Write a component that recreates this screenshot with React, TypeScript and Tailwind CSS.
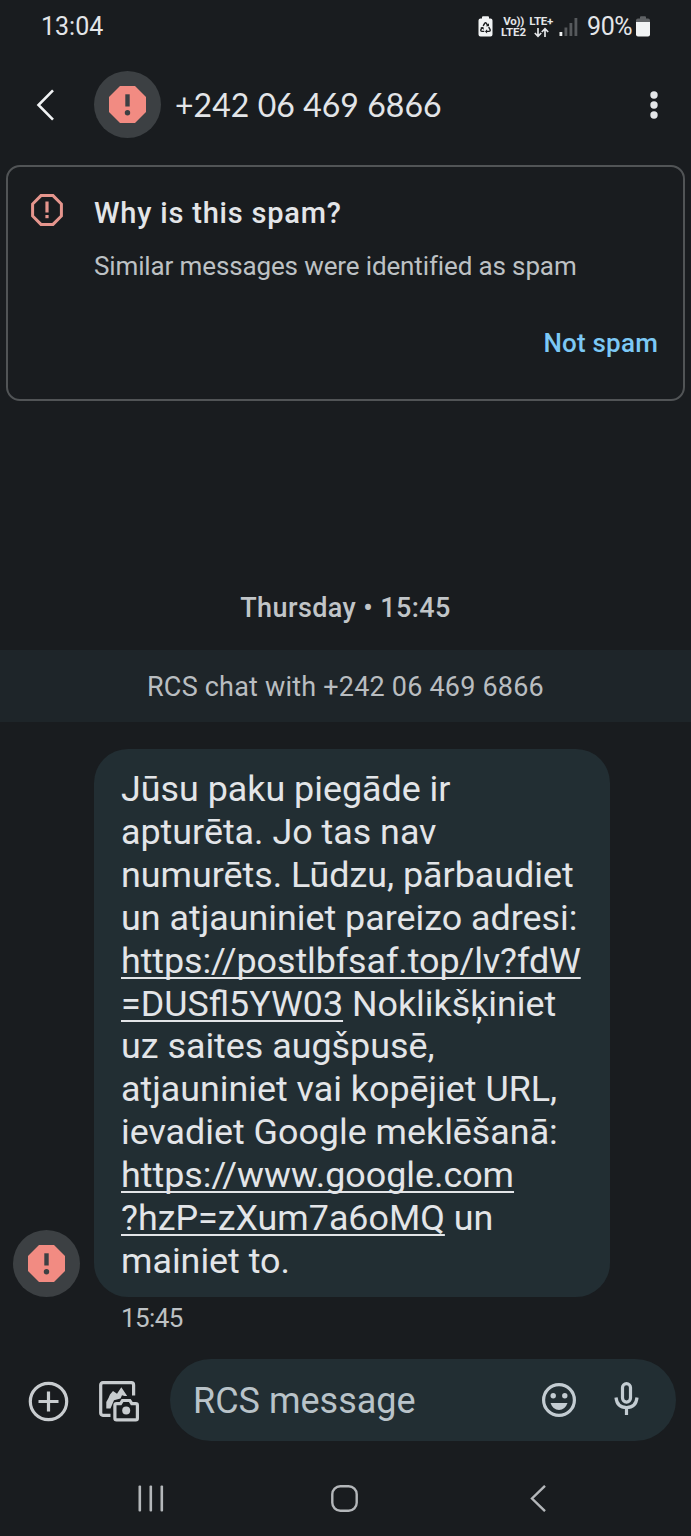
import React from 'react';

const SANS = "font-['Roboto','Noto_Sans',sans-serif]";

const SpamAvatar: React.FC = () => (
  <div className="w-[67px] h-[67px] shrink-0 rounded-full bg-[#3c4043] flex items-center justify-center">
    <svg className="w-[37px] h-[37px]" viewBox="0 0 37 37">
      <path d="M11 0h15l11 11v15L26 37H11L0 26V11z" fill="#f28b82" />
      <rect x="16.3" y="8.3" width="4.4" height="12.2" fill="#3c4043" />
      <circle cx="18.5" cy="26.8" r="2.7" fill="#3c4043" />
    </svg>
  </div>
);

const StatusIcons: React.FC = () => (
  <div className="flex items-center">
    <svg className="w-[15px] h-[21px]" viewBox="0 0 15 21">
      <path d="M4 2.5V1.2Q4 .3 5 .3h5q1 0 1 .9v1.3h1.5q2 0 2 2v14q0 2-2 2h-10q-2 0-2-2v-14q0-2 2-2z" fill="#f1f3f4" />
      <path
        d="M5.200 9.800 6.600 7.300q.9-1.200 1.800 0l1.300 2.200M10.700 11.200l1.400 2.400q.5 1.700-1.200 1.800H8.300M6.300 15.400H4.100q-1.700-.1-1.200-1.800l1.100-1.900"
        fill="none"
        stroke="#1a1c1e"
        strokeWidth="1.400"
      />
      <path d="M7.800 10.300h3.200V7.300zM9.100 13.300v4.200L7 15.400zM2.300 11.700l3-.9.700 3z" fill="#1a1c1e" />
    </svg>
    <div className="ml-[7px] w-[27px] flex flex-col items-center text-[11.5px] leading-[11px] font-bold">
      <p className="tracking-[-0.3px]">Vo))</p>
      <p>LTE2</p>
    </div>
    <div className="ml-px w-[26px] flex flex-col items-center text-[11.5px] leading-[11px] font-bold">
      <p className="tracking-[-0.3px] whitespace-nowrap">LTE+</p>
      <svg className="w-[15px] h-[11px]" viewBox="0 0 15 11" fill="none" stroke="#e3e5e8" strokeWidth="1.700">
        <path d="M4 1v8M.8 6 4 9.300 7.200 6M11 10V2M7.800 5 11 1.700 14.200 5" />
      </svg>
    </div>
    <svg className="ml-[5px] w-[19px] h-[20px]" viewBox="0 0 19 20">
      <rect x="0.500" y="15" width="2.800" height="4" fill="#f1f3f4" />
      <rect x="5.500" y="10.500" width="2.800" height="8.500" fill="#56595c" />
      <rect x="10.500" y="6" width="2.800" height="13" fill="#56595c" />
      <rect x="15.500" y="1" width="2.800" height="18" fill="#56595c" />
    </svg>
    <span className="ml-[9px] text-[25px] tracking-[-0.500px]">90%</span>
    <svg className="ml-[4px] w-[14px] h-[21px]" viewBox="0 0 14 21">
      <path d="M4 2.500V1.200Q4 .3 5 .3h4q1 0 1 .9v1.300h2q2 0 2 2V6H0V4.500q0-2 2-2z" fill="#5f6265" />
      <path d="M0 6h14v12.500q0 2-2 2H2q-2 0-2-2z" fill="#f1f3f4" />
    </svg>
  </div>
);

const StatusBar: React.FC = () => (
  <div className="h-[53px] pl-[41px] pr-[41px] flex items-center justify-between text-[#e3e5e8]">
    <span className="text-[25px]">13:04</span>
    <StatusIcons />
  </div>
);

const Header: React.FC = () => (
  <header className="h-[104px] pb-px pl-[36px] pr-[32px] flex items-center">
    <svg className="w-[19px] h-[32px] mr-[39px]" viewBox="0 0 19 32" fill="none" stroke="#f1f3f4" strokeWidth="2.600">
      <path d="M17 1.300 2.500 16 17 30.700" />
    </svg>
    <SpamAvatar />
    <h1 className="ml-[14px] flex-1 font-['Lato',sans-serif] text-[32px] tracking-[0.05px] text-[#e3e5e8] whitespace-nowrap">
      +242 06 469 6866
    </h1>
    <svg className="w-[10px] h-[30px]" viewBox="0 0 10 30" fill="#e3e5e8">
      <circle cx="5" cy="5" r="3.700" />
      <circle cx="5" cy="15" r="3.700" />
      <circle cx="5" cy="25" r="3.700" />
    </svg>
  </header>
);

const SpamCard: React.FC = () => (
  <section className="mt-[8px] mx-[6px] h-[236px] rounded-[14px] border-2 border-[#515456] pl-[23px] pr-[25px] flex">
    <svg className="mt-[27px] w-[32px] h-[32px] shrink-0" viewBox="0 0 32 32">
      <path d="M10 1.600h12l8.400 8.400v12L22 30.400H10L1.600 22V10z" fill="none" stroke="#e5958d" strokeWidth="3" />
      <rect x="14.400" y="7.500" width="3.200" height="11" fill="#e5958d" />
      <rect x="14.400" y="21" width="3.200" height="3.200" fill="#e5958d" />
    </svg>
    <div className="ml-[31px] flex-1 flex flex-col">
      <h2 className="mt-[27px] text-[29px] leading-[38px] font-medium tracking-[0.800px] text-[#e3e5e8] whitespace-nowrap">Why is this spam?</h2>
      <p className="mt-[17px] text-[26px] leading-[34px] tracking-[-0.130px] text-[#bdc1c4] whitespace-nowrap">
        Similar messages were identified as spam
      </p>
      <button className="mt-[43px] self-end text-[26px] leading-[34px] font-medium tracking-[0.200px] text-[#7cc8f5]">Not spam</button>
    </div>
  </section>
);

const Link: React.FC<{ children: React.ReactNode }> = ({ children }) => (
  <a className="underline decoration-2 underline-offset-[4px] [text-decoration-skip-ink:none]">{children}</a>
);

const Message: React.FC = () => (
  <div className="mt-[27px] pl-[13px] flex items-end">
    <SpamAvatar />
    <div className="ml-[14px] w-[516px] h-[548px] rounded-[34px] bg-[#222e33] pt-[19px] pl-[27px] text-[35.850px] leading-[42.900px] text-[#e3e5e8] whitespace-nowrap">
      <p>Jūsu paku piegāde ir</p>
      <p>apturēta. Jo tas nav</p>
      <p>numurēts. Lūdzu, pārbaudiet</p>
      <p>un atjauniniet pareizo adresi:</p>
      <p className="tracking-[-0.070px]"><Link>https://postlbfsaf.top/lv?fdW</Link></p>
      <p><Link>=DUSfl5YW03</Link> Noklikšķiniet</p>
      <p>uz saites augšpusē,</p>
      <p>atjauniniet vai kopējiet URL,</p>
      <p>ievadiet Google meklēšanā:</p>
      <p><Link>https://www.google.com</Link></p>
      <p><Link>?hzP=zXum7a6oMQ</Link> un</p>
      <p>mainiet to.</p>
    </div>
  </div>
);

const Composer: React.FC = () => (
  <div className="mt-[22px] pl-[28px] pr-[15px] h-[82px] flex items-center">
    <svg className="mt-[3px] w-[41px] h-[41px]" viewBox="0 0 41 41" fill="none" stroke="#c8cccf" strokeWidth="3.200">
      <circle cx="20.500" cy="20.500" r="18.200" />
      <path d="M20.500 10.500v20M10.500 20.500h20" />
    </svg>
    <svg className="mt-[3px] ml-[30px] w-[41px] h-[41px]" viewBox="0 0 41 41" fill="none" stroke="#c8cccf" strokeWidth="3.200">
      <path d="M11.500 34.300H4q-2.300 0-2.300-2.300V4q0-2.300 2.300-2.300h28.300q2.300 0 2.300 2.300v10.500" />
      <path d="M7.300 27.500V21q2.500-4 3.700-7.500l3-3.500 4 2.800 4.300-6.500 5.900 8.700h-2.700l-2.500-.7-1.500 3.200L15 19.300l-3.500 8.200z" fill="#c8cccf" stroke="none" />
      <path d="M17.500 22.700h4l2-3.200h7.300l2 3.200h4q1.600 0 1.600 1.600v12.900q0 1.600-1.600 1.600H17.500q-1.600 0-1.600-1.600V24.300q0-1.600 1.600-1.600z" />
      <circle cx="27.200" cy="29.500" r="4" fill="#c8cccf" stroke="none" />
    </svg>
    <div className="ml-[30px] flex-1 h-[82px] rounded-full bg-[#222e33] pl-[23px] pr-[37px] flex items-center">
      <span className="mt-[2px] flex-1 text-[36px] text-[#b9c3c9] whitespace-nowrap">RCS message</span>
      <svg className="w-[34px] h-[34px]" viewBox="0 0 34 34">
        <circle cx="17" cy="17" r="15.400" fill="none" stroke="#c3ccd2" strokeWidth="3.200" />
        <circle cx="11.200" cy="12.800" r="2.700" fill="#c3ccd2" />
        <circle cx="22.800" cy="12.800" r="2.700" fill="#c3ccd2" />
        <path d="M8.500 20h17q-2.500 7-8.500 7t-8.500-7z" fill="#c3ccd2" />
      </svg>
      <svg className="ml-[38px] mb-[4px] w-[25px] h-[33px]" viewBox="0 0 25 33" fill="none" stroke="#c3ccd2" strokeWidth="3.200">
        <rect x="8.500" y="1.600" width="8" height="18.500" rx="4" />
        <path d="M2 15.500q1 10 10.500 10T23 15.500M12.500 25.500V33" />
      </svg>
    </div>
  </div>
);

const NavBar: React.FC = () => (
  <nav className="mt-[43px] px-[138px] h-[28px] flex items-center justify-between">
    <svg className="w-[26px] h-[27px]" viewBox="0 0 26 27" fill="#b4b7ba">
      <rect x="0.500" y="0.500" width="2.600" height="26" rx="1" />
      <rect x="11.500" y="0.500" width="2.600" height="26" rx="1" />
      <rect x="22.500" y="0.500" width="2.600" height="26" rx="1" />
    </svg>
    <svg className="mr-[6px] w-[27px] h-[27px]" viewBox="0 0 27 27" fill="none" stroke="#b4b7ba" strokeWidth="2.400">
      <rect x="1.300" y="1.300" width="24.400" height="24.400" rx="8" />
    </svg>
    <svg className="mr-[7px] w-[16px] h-[27px]" viewBox="0 0 16 27" fill="none" stroke="#b4b7ba" strokeWidth="2.400">
      <path d="M15 .8 2 13.500 15 26.200" />
    </svg>
  </nav>
);

export default function App() {
  return (
    <div className={`w-[691px] h-[1536px] overflow-hidden bg-[#191c1f] flex flex-col ${SANS}`}>
      <StatusBar />
      <Header />
      <SpamCard />
      <p className="mt-[189px] h-[36px] text-center text-[27px] leading-[36px] font-medium tracking-[0.400px] text-[#c1c5c8] whitespace-nowrap">
        Thursday • 15:45
      </p>
      <div className="mt-[24px] h-[72px] pt-[2px] bg-[#1e2529] flex items-center justify-center text-[27px] tracking-[0.200px] text-[#b9bdc0] whitespace-nowrap">
        RCS chat with +242 06 469 6866
      </div>
      <Message />
      <p className="mt-[3px] mb-px ml-[121px] h-[36px] text-[26px] leading-[36px] tracking-[-0.600px] text-[#bdc1c4]">15:45</p>
      <Composer />
      <NavBar />
    </div>
  );
}
